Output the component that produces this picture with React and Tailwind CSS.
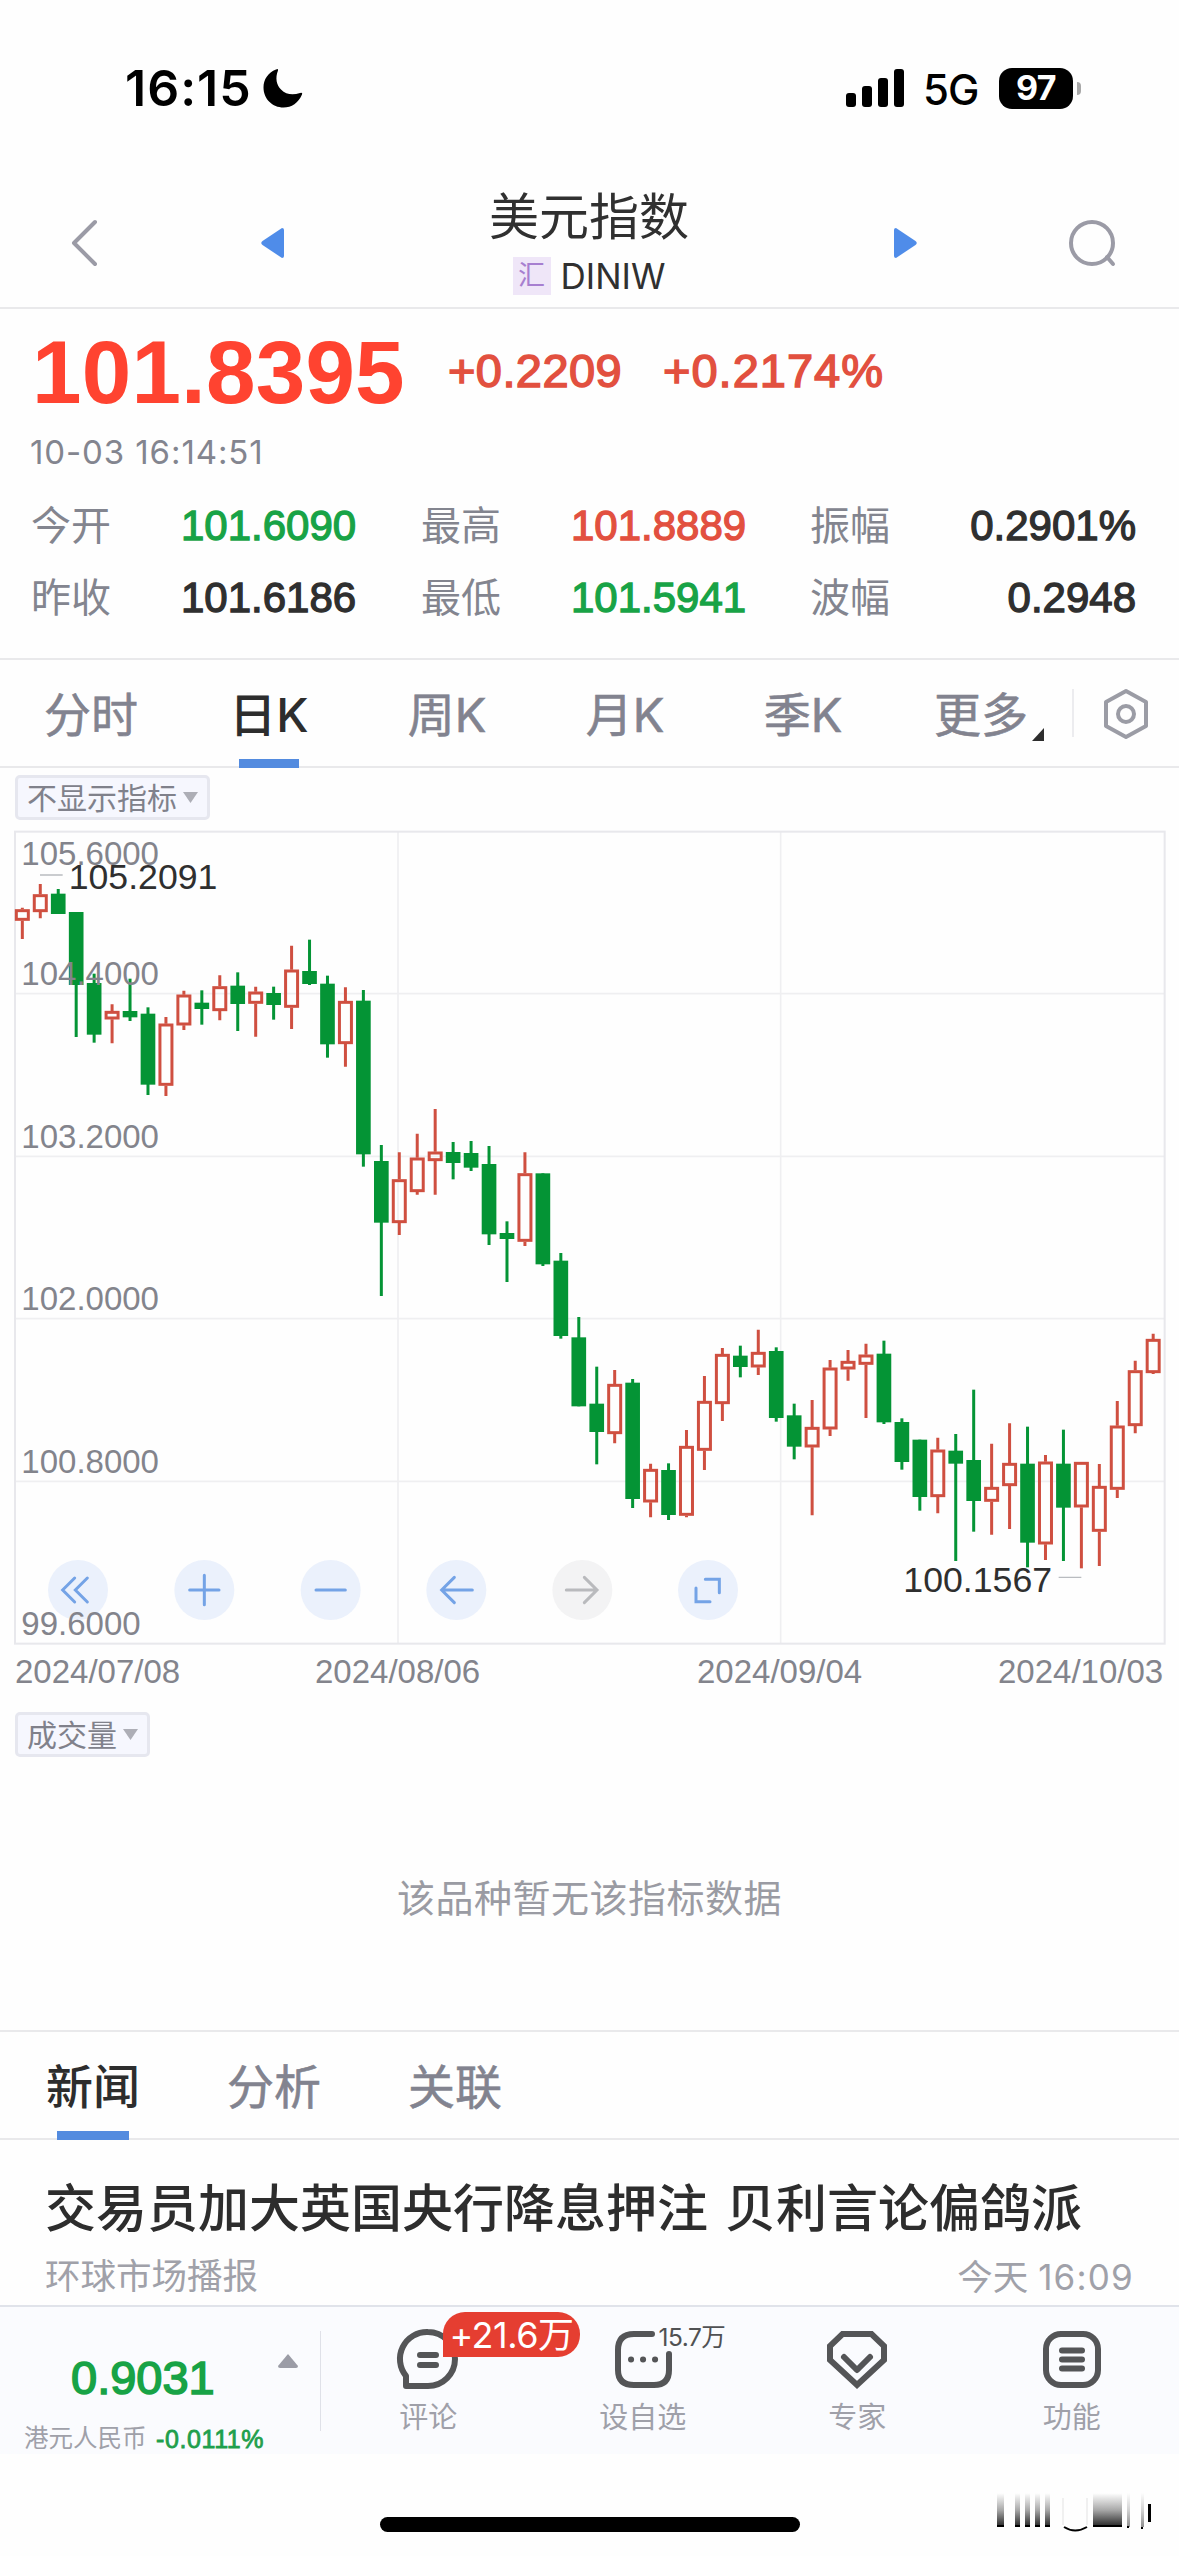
// [color, high, body top, body bottom, low] in chart units (3 per pixel)
const candles = [
  ["r", 263, 268, 302, 357], ["r", 192, 223, 276, 295], ["g", 207, 221, 282, 282], ["g", 276, 276, 495, 651],
  ["g", 461, 489, 644, 668], ["r", 553, 573, 598, 670], ["g", 476, 573, 592, 603], ["g", 562, 581, 794, 825],
  ["r", 591, 611, 797, 828], ["r", 512, 524, 616, 630], ["g", 511, 548, 567, 614], ["r", 466, 499, 573, 601],
  ["g", 457, 497, 552, 633], ["r", 500, 515, 551, 650], ["g", 500, 519, 555, 599], ["r", 377, 449, 563, 627],
  ["g", 359, 453, 492, 495], ["g", 467, 491, 673, 713], ["r", 502, 543, 672, 740], ["g", 510, 542, 1003, 1040],
  ["g", 975, 1023, 1208, 1428], ["r", 997, 1078, 1209, 1245], ["r", 941, 1013, 1116, 1124], ["r", 867, 995, 1023, 1124],
  ["g", 966, 996, 1029, 1078], ["g", 963, 999, 1043, 1053], ["g", 978, 1032, 1243, 1275], ["g", 1204, 1239, 1257, 1386],
  ["r", 997, 1060, 1265, 1278], ["g", 1060, 1060, 1333, 1338], ["g", 1299, 1322, 1548, 1556], ["g", 1491, 1552, 1759, 1759],
  ["g", 1640, 1751, 1836, 1933], ["r", 1650, 1692, 1842, 1870], ["g", 1677, 1688, 2037, 2064], ["r", 1931, 1947, 2047, 2092],
  ["g", 1930, 1950, 2085, 2100], ["r", 1830, 1878, 2087, 2092], ["r", 1668, 1743, 1892, 1950], ["r", 1584, 1602, 1752, 1803],
  ["g", 1577, 1607, 1641, 1672], ["r", 1529, 1596, 1642, 1665], ["g", 1582, 1593, 1794, 1805], ["g", 1751, 1786, 1880, 1918],
  ["r", 1740, 1821, 1882, 2086], ["r", 1620, 1643, 1828, 1848], ["r", 1590, 1623, 1648, 1682], ["r", 1571, 1604, 1634, 1794],
  ["g", 1562, 1601, 1807, 1812], ["g", 1795, 1806, 1926, 1949], ["g", 1859, 1859, 2031, 2072], ["r", 1853, 1889, 2031, 2080],
  ["g", 1842, 1892, 1931, 2223], ["g", 1709, 1920, 2043, 2135], ["r", 1871, 2001, 2045, 2144], ["r", 1810, 1929, 1998, 2127],
  ["g", 1820, 1931, 2168, 2242], ["r", 1905, 1925, 2173, 2220], ["g", 1829, 1931, 2063, 2223], ["r", 1926, 1926, 2062, 2245],
  ["r", 1932, 1998, 2135, 2238], ["r", 1743, 1817, 2009, 2034], ["r", 1622, 1651, 1818, 1840], ["r", 1541, 1557, 1659, 1662],
];

const priceLabels = [
  ["105.6000", 135],
  ["104.4000", 495],
  ["103.2000", 984],
  ["102.0000", 1470],
  ["100.8000", 1959],
  ["99.6000", 2446],
];

const stats = [
  { label: "今开", value: "101.6090", color: "text-[#18a346]" },
  { label: "最高", value: "101.8889", color: "text-[#e2503f]" },
  { label: "振幅", value: "0.2901%", color: "text-[#2f2f2f]" },
  { label: "昨收", value: "101.6186", color: "text-[#2f2f2f]" },
  { label: "最低", value: "101.5941", color: "text-[#18a346]" },
  { label: "波幅", value: "0.2948", color: "text-[#2f2f2f]" },
];

const periods = ["分时", "日K", "周K", "月K", "季K", "更多"];

const StatusBar = () => (
  <div className="flex h-[140px] items-start justify-between pl-[125px] pr-[98px] pt-[66px] font-['Inter',sans-serif] text-black">
    <div className="flex h-[44px] items-center">
      <span className="w-[138px] text-[50px] font-semibold leading-none tracking-[1px]">16:15</span>
      <svg width="40" height="40" viewBox="0 0 40 40">
        <path d="M13 1.500Q15.500 0 15 2.500C12 10 13.500 17 18 21.500C23 26.500 29.500 27.500 37 25Q40 24 39 26.500C35.500 35 28.500 39.500 20.500 39.500C9.500 39.500 0.500 31 0.500 19.500C0.500 11.500 5 4.500 13 1.500Z" />
      </svg>
    </div>
    <div className="flex h-[44px] items-center">
      <svg width="58" height="38" viewBox="0 0 58 38">
        <rect x="0" y="24" width="10" height="14" rx="3" />
        <rect x="16" y="17" width="10" height="21" rx="3" />
        <rect x="32" y="9" width="10" height="29" rx="3" />
        <rect x="48" y="0" width="10" height="38" rx="3" />
      </svg>
      <span className="ml-[19px] w-[76px] pt-[3px] text-[42px] font-medium leading-none tracking-[-1px]">5G</span>
      <span className="flex h-[41px] w-[74px] items-center justify-center rounded-[13px] bg-black text-[34px] font-bold leading-none tracking-[-0.5px] text-white">
        97
      </span>
      <span className="ml-[4px] h-[13px] w-[4px] rounded-r-full bg-[#a8a8a8]" />
    </div>
  </div>
);

const Header = () => (
  <div className="flex h-[169px] items-center border-b-2 border-[#e9e9eb] pl-[70px] pt-[39px]">
    <svg width="30" height="48" viewBox="0 0 30 48" className="shrink-0" fill="none" stroke="#9b9ba6" strokeWidth="4" strokeLinecap="round" strokeLinejoin="round">
      <path d="M25 3L4 24L25 45" />
    </svg>
    <svg width="24" height="32" viewBox="0 0 24 32" className="ml-[160px] shrink-0" fill="#4f8ce9">
      <path d="M22 1L2.500 14Q0 16 2.500 18L22 31Q24 31 24 29V3Q24 1 22 1Z" />
    </svg>
    <div className="mx-[204px] mt-[-6px] flex w-[202px] flex-col items-center">
      <div className="whitespace-nowrap text-[50px] leading-[66px] text-[#303030]">美元指数</div>
      <div className="mt-[6px] flex items-center gap-[10px]">
        <span className="flex h-[38px] w-[38px] items-center justify-center bg-[#efe6f8] text-[27px] leading-none text-[#a77fd0]">汇</span>
        <span className="font-['Inter',sans-serif] text-[35px] leading-none text-[#303030]">DINIW</span>
      </div>
    </div>
    <svg width="24" height="32" viewBox="0 0 24 32" className="shrink-0" fill="#4f8ce9">
      <path d="M2 1L21.500 14Q24 16 21.500 18L2 31Q0 31 0 29V3Q0 1 2 1Z" />
    </svg>
    <svg width="50" height="50" viewBox="0 0 50 50" className="ml-[150px] shrink-0" fill="none" stroke="#9b9ba6" strokeWidth="4" strokeLinecap="round">
      <circle cx="24" cy="25" r="21" />
      <path d="M39 39L45 46" />
    </svg>
  </div>
);

const Quote = () => (
  <div className="h-[351px] border-b-2 border-[#e9e9eb] pt-[20px]">
    <div className="flex h-[86px] items-center pl-[32px]">
      <span className="w-[416px] text-[89px] font-bold leading-none tracking-[0.2px] text-[#ff4330]">101.8395</span>
      <span className="w-[215px] pb-[3px] text-[47px] leading-none tracking-[0.4px] text-[#e2503f] [-webkit-text-stroke:1.5px]">+0.2209</span>
      <span className="pb-[3px] text-[47px] leading-none tracking-[1px] text-[#e2503f] [-webkit-text-stroke:1.5px]">+0.2174%</span>
    </div>
    <div className="flex h-[73px] items-center pl-[30px] pt-[2px] font-['Inter',sans-serif] text-[33px] tracking-[0.9px] text-[#83858f]">
      10-03 16:14:51
    </div>
    <div className="mt-[2px] grid grid-cols-[390px_389px_326px] pl-[31px]">
      {stats.map((s, i) => (
        <div key={s.label} className={`flex h-[72px] items-center ${i % 3 === 2 ? "justify-between" : ""}`}>
          <span className="w-[150px] text-[40px] leading-none text-[#83858f]">{s.label}</span>
          <span className={`text-[42px] leading-none [-webkit-text-stroke:1.3px] ${s.color}`}>{s.value}</span>
        </div>
      ))}
    </div>
  </div>
);

const PeriodTabs = () => (
  <div className="flex h-[108px] items-center border-b-2 border-[#e9e9eb] pl-[2px]">
    {periods.map((p) => (
      <div key={p} className="relative flex h-full w-[178px] items-center justify-center">
        <span
          className={`pt-[4px] text-[47px] leading-none ${
            p === "日K" ? "font-medium text-[#2d2d2d]" : "text-[#82838f] [-webkit-text-stroke:0.6px]"
          }`}
        >
          {p[0]}
          <span className={p[1] === "K" ? "font-['Inter',sans-serif]" : ""}>{p[1]}</span>
        </span>
        {p === "日K" && <span className="absolute bottom-[-2px] h-[9px] w-[60px] bg-[#538bdf]" />}
        {p === "更多" && (
          <svg width="12" height="13" viewBox="0 0 12 13" className="absolute bottom-[25px] right-[26px]" fill="#2d2d2d">
            <path d="M12 0V13H0Z" />
          </svg>
        )}
      </div>
    ))}
    <div className="ml-[2px] h-[48px] w-[2px] bg-[#ececef]" />
    <svg width="46" height="52" viewBox="0 0 46 52" className="ml-[29px] mt-[2px]" fill="none" stroke="#9b9ca5" strokeWidth="4" strokeLinejoin="round">
      <path d="M23 3L43 14V38L23 49L3 38V14Z" />
      <circle cx="23" cy="26" r="8" />
    </svg>
  </div>
);

const Chip = ({ children }) => (
  <div className="flex h-[45px] w-fit items-center rounded-[5px] border-[3px] border-[#e6e7ef] bg-[#f6f7fe] pl-[9px] pr-[9px]">
    <span className="pt-[2px] text-[30px] leading-none text-[#80818b]">{children}</span>
    <svg width="15" height="11" viewBox="0 0 15 11" className="ml-[6px]" fill="#adaeb6">
      <path d="M0 0H15L7.500 11Z" />
    </svg>
  </div>
);

const toolButtons = [
  { x: 234, d: "M-10 -36L-46 0L-10 36M28 -36L-8 0L28 36" },
  { x: 613, d: "M-44 0H44M0 -44V44" },
  { x: 992, d: "M-44 0H44" },
  { x: 1369, d: "M48 0H-42M-6 -38L-44 0L-6 38" },
  { x: 1747, d: "M-48 0H42M6 -38L44 0L6 38", off: true },
  { x: 2124, d: "M-8 -32H34V8M-36 -6V35H6" },
];

const Chart = () => (
  <svg width="1179" height="830" viewBox="0 0 3537 2490" className="block font-['Liberation_Sans',sans-serif]">
    <g stroke="#efeff1" strokeWidth="5">
      {[521, 1009, 1496, 1984].map((y) => (
        <path key={y} d={`M45 ${y}H3494`} />
      ))}
      {[1194, 2342].map((x) => (
        <path key={x} d={`M${x} 35V2471`} />
      ))}
    </g>
    <rect x="45" y="35" width="3449" height="2436" fill="none" stroke="#e8e8ec" strokeWidth="6" />
    {toolButtons.map((b) => (
      <g key={b.x} transform={`translate(${b.x} 2310)`}>
        <circle r="90" fill={b.off ? "#f3f3f4" : "#ebf1fc"} />
        <path d={b.d} fill="none" stroke={b.off ? "#b9babd" : "#74a3e6"} strokeWidth="9" strokeLinecap="round" />
      </g>
    ))}
    {candles.map(([color, high, top, bottom, low], i) => {
      const x = 67 + i * 53.85;
      return color === "g" ? (
        <g key={i} fill="#049435">
          <rect x={x - 4.5} y={high} width="9" height={low - high} />
          <rect x={x - 22} y={top} width="44" height={bottom - top} />
        </g>
      ) : (
        <g key={i} stroke="#cf4f40" strokeWidth="9" fill="none">
          <path d={`M${x} ${high}V${top}M${x} ${bottom}V${low}`} />
          <rect x={x - 18} y={top + 4} width="36" height={bottom - top - 8} />
        </g>
      );
    })}
    <g fill="#83848c" fontSize="99">
      {priceLabels.map(([text, y]) => (
        <text key={text} x="64" y={y}>{text}</text>
      ))}
    </g>
    <path d="M120 165H188M3176 2272H3244" stroke="#b9bcc0" strokeWidth="4" />
    <g fill="#2f2f2f" fontSize="107">
      <text x="206" y="206">105.2091</text>
      <text x="2710" y="2316">100.1567</text>
    </g>
  </svg>
);

const ChartSection = () => (
  <div className="h-[1264px] border-b-2 border-[#e9e9eb]">
    <div className="pl-[15px] pt-[7px]">
      <Chip>不显示指标</Chip>
    </div>
    <Chart />
    <div className="grid grid-cols-[300px_382px_301px_164px] pl-[15px] pt-[3px] text-[33px] leading-[38px] text-[#83848c]">
      <span>2024/07/08</span>
      <span>2024/08/06</span>
      <span>2024/09/04</span>
      <span>2024/10/03</span>
    </div>
    <div className="pl-[15px] pt-[21px]">
      <Chip>成交量</Chip>
    </div>
    <div className="mt-[117px] text-center text-[38px] leading-[50px] tracking-[0.5px] text-[#9a9ba3]">该品种暂无该指标数据</div>
  </div>
);

const News = () => (
  <div>
    <div className="flex h-[108px] items-center gap-[87px] border-b-2 border-[#e9e9eb] pl-[46px] text-[47px] leading-none text-[#82838f]">
      <div className="relative flex h-full items-center justify-center text-[#2d2d2d]">
        <span className="pt-[5px] font-medium">新闻</span>
        <span className="absolute bottom-[-2px] h-[9px] w-[72px] bg-[#538bdf]" />
      </div>
      <span className="pt-[5px] [-webkit-text-stroke:0.6px]">分析</span>
      <span className="pt-[5px] [-webkit-text-stroke:0.6px]">关联</span>
    </div>
    <div className="h-[165px] pl-[45px] pr-[45px] pt-[37px]">
      <div className="whitespace-nowrap text-[51px] font-medium leading-[66px] text-[#2d2d2d]">
        交易员加大英国央行降息押注<span className="ml-[17px]">贝利言论偏鸽派</span>
      </div>
      <div className="mt-[12px] flex justify-between text-[35.500px] leading-[44px] text-[#a0a1a9]">
        <span>环球市场播报</span>
        <span>
          今天 <span className="font-['Inter',sans-serif] text-[35px] tracking-[1.2px]">16:09</span>
        </span>
      </div>
    </div>
  </div>
);

const NavItem = ({ label, children }) => (
  <div className="relative flex flex-1 flex-col items-center pt-[20px]">
    <svg width="64" height="64" viewBox="0 0 64 64" fill="none" stroke="#545557" strokeWidth="6" strokeLinecap="round" strokeLinejoin="round">
      {children}
    </svg>
    <span className="mt-[10px] text-[29px] leading-[34px] text-[#9fa0a9]">{label}</span>
  </div>
);

const BottomBar = () => (
  <div className="flex h-[149px] border-t-2 border-[#e0e3ea] bg-[#fafbfe]">
    <div className="flex w-[320px] flex-col pl-[24px] pt-[45px]">
      <div className="flex items-center">
        <span className="ml-[47px] w-[207px] text-[47px] leading-[52px] text-[#18a346] [-webkit-text-stroke:1.6px]">0.9031</span>
        <svg width="20" height="14" viewBox="0 0 20 14" className="mb-[34px]" fill="#9b9ca6">
          <path d="M10 0L20 12Q20 14 18 14H2Q0 14 0 12Z" />
        </svg>
      </div>
      <div className="mt-[19px] flex items-center text-[24.500px] leading-[32px] text-[#9fa0a9]">
        <span className="w-[132px]">港元人民币</span>
        <span className="whitespace-nowrap text-[25px] tracking-[0.6px] text-[#1f9f4c] [-webkit-text-stroke:0.8px]">-0.0111%</span>
      </div>
    </div>
    <div className="mt-[24px] h-[100px] w-px bg-[#dfe1e8]" />
    <div className="flex flex-1">
      <div className="relative flex flex-1">
        <NavItem label="评论">
          <path d="M32 5A27 27 0 0 1 32 59H10V49A27 27 0 0 1 32 5Z" />
          <path d="M24 28H40M24 38H40" />
        </NavItem>
        <span className="absolute left-[122px] top-[5px] flex h-[45px] w-[137px] items-center justify-center rounded-[22px] rounded-bl-none bg-[#e53e31] font-['Inter','Noto_Sans_CJK_SC',sans-serif] text-[36px] leading-none tracking-[-0.5px] text-white">
          +21.6万
        </span>
      </div>
      <div className="relative flex flex-1">
        <NavItem label="设自选">
          <path d="M41 7H23Q7 7 7 23V43Q7 58 23 58H43Q58 58 58 43V27" />
          <path d="M20 32.500H20.100M32 32.500H32.100M44 32.500H44.100" />
        </NavItem>
        <span className="absolute left-[123px] top-[17px] whitespace-nowrap font-['Inter','Noto_Sans_CJK_SC',sans-serif] text-[24.500px] leading-[26px] tracking-[-0.5px] text-[#505153]">
          15.7万
        </span>
      </div>
      <NavItem label="专家">
        <path strokeLinejoin="miter" d="M17.500 7H46.500L59 19V33L32 58L5 33V19Z" />
        <path d="M19 30L32 43L45 30" />
      </NavItem>
      <NavItem label="功能">
        <rect x="6" y="7" width="52" height="51" rx="15" />
        <path d="M22 23.500H42M22 32.500H42M22 41.500H42" />
      </NavItem>
    </div>
  </div>
);

// faded stripes in the lower right corner
const Stripes = () => (
  <svg width="156" height="40" viewBox="0 0 156 40" className="mr-[27px] mt-[-24px]">
    <defs>
      <linearGradient id="fade" x1="0" y1="0" x2="0" y2="1">
        <stop offset="0" stopColor="#fff" />
        <stop offset="0.5" stopColor="#a8a8a8" />
        <stop offset="1" stopColor="#222" />
      </linearGradient>
    </defs>
    <g fill="url(#fade)">
      {[[1, 7], [19, 5], [29, 5], [39, 5], [49, 5], [97, 29]].map(([x, w]) => (
        <rect key={x} x={x} y="0" width={w} height="34" />
      ))}
    </g>
    <g fill="url(#fade)" opacity="0.5">
      <rect x="131" y="0" width="3" height="34" />
      <rect x="145" y="0" width="3" height="34" />
    </g>
    <path d="M67 5V32M91 5V32" stroke="#f0f0f0" strokeWidth="2" />
    <path d="M1 33H8M19 33H24M29 33H34M39 33H44M49 33H54M97 33H126M131 34H133M145 35H147" stroke="#000" strokeWidth="2" />
    <path d="M68 34Q79 41 91 34" fill="none" stroke="#000" strokeWidth="2" />
    <rect x="152" y="11" width="3" height="18" fill="#000" />
  </svg>
);

const App = () => {
  return (
    <div className="h-[2556px] w-[1179px] overflow-hidden bg-[#fefefe] font-['Liberation_Sans','Noto_Sans_CJK_SC',sans-serif]">
      <StatusBar />
      <Header />
      <Quote />
      <PeriodTabs />
      <ChartSection />
      <News />
      <BottomBar />
      <div className="flex items-start justify-between pl-[380px] pt-[63px]">
        <div className="h-[15px] w-[420px] rounded-full bg-black" />
        <Stripes />
      </div>
    </div>
  );
};

export default App;
